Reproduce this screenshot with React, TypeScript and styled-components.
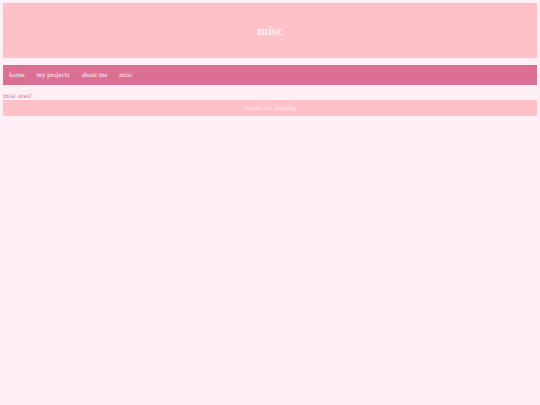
import React from "react";
import styled, { createGlobalStyle } from "styled-components";

const GlobalStyle = createGlobalStyle`
  body {
    margin: 0;
    background: lavenderblush;
    color: palevioletred;
    font-family: "Liberation Serif", "Times New Roman", serif;
    font-size: 7px;
    line-height: 8px;
    text-rendering: geometricPrecision;
  }
`;

const Page = styled.div`
  padding: 3px;
`;

const Header = styled.header`
  padding: 20px;
  background: #ffc0c8;
  color: lavenderblush;
  text-align: center;
`;

const Title = styled.h1`
  margin: 0;
  font-size: 13px;
  line-height: 15px;
`;

const Nav = styled.nav`
  display: flex;
  gap: 12px;
  margin: 7px 0;
  padding: 6px;
  background: palevioletred;
`;

const NavLink = styled.a`
  color: lavenderblush;
  text-decoration: none;
`;

const Text = styled.p`
  margin: 0;
`;

const Footer = styled.footer`
  padding: 4px;
  background: #ffc0c8;
  color: lavenderblush;
  text-align: center;
`;

const links = ["home", "my projects", "about me", "misc"];

export default function App() {
  return (
    <>
      <GlobalStyle />
      <Page>
        <Header>
          <Title>misc</Title>
        </Header>
        <Nav>
          {links.map((label) => (
            <NavLink key={label} href="#">
              {label}
            </NavLink>
          ))}
        </Nav>
        <main>
          <Text>misc area!.</Text>
        </main>
        <Footer>thanks for looking</Footer>
      </Page>
    </>
  );
}
